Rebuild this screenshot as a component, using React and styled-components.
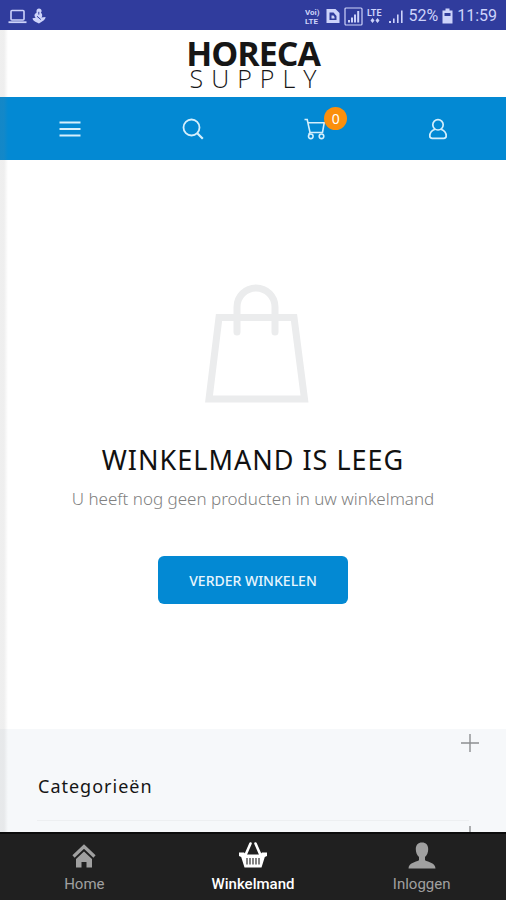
import React from 'react';
import styled, { createGlobalStyle } from 'styled-components';

const GlobalStyle = createGlobalStyle`
  * {
    box-sizing: border-box;
  }

  body {
    margin: 0;
    background: #fff;
    font-family: 'Noto Sans', 'Open Sans', sans-serif;
  }

  button {
    padding: 0;
    border: 0;
    background: none;
    font: inherit;
    color: inherit;
    cursor: pointer;
  }
`

const Screen = styled.div`
  display: flex;
  flex-direction: column;
  height: 100vh;
`

const StatusBar = styled.header`
  display: flex;
  align-items: center;
  justify-content: space-between;
  flex: none;
  height: 30px;
  padding: 2px 9px 0 8px;
  background: #303c9d;
  color: #cdd3fa;
  font: 16px/20px Roboto, sans-serif;
`

const StatusGroup = styled.div`
  display: flex;
  align-items: center;
  gap: ${props => props.$gap}px;
`

const Page = styled.div`
  position: relative;
  display: flex;
  flex-direction: column;
  flex: 1;
  min-height: 0;
  overflow: hidden;
`

const EdgeShadow = styled.div`
  position: absolute;
  top: 0;
  bottom: 0;
  left: 0;
  width: 8px;
  background: linear-gradient(to right, rgba(128, 128, 128, 0.13) 50%, rgba(128, 128, 128, 0));
  pointer-events: none;
`

const Logo = styled.a`
  display: flex;
  flex-direction: column;
  align-items: center;
  flex: none;
  height: 67px;
  padding-top: 8px;
  color: #161616;
  font-family: 'Open Sans', sans-serif;
  text-decoration: none;
`

const LogoName = styled.span`
  font-size: 34px;
  line-height: 30px;
  font-weight: 700;
  letter-spacing: -1px;
`

const LogoSub = styled.span`
  padding-left: 8px;
  font-size: 25px;
  line-height: 20px;
  font-weight: 300;
  letter-spacing: 8px;
`

const Toolbar = styled.nav`
  display: flex;
  align-items: center;
  justify-content: space-between;
  flex: none;
  height: 63px;
  padding: 0 54px 0 56px;
  background: #0389d3;
  color: #d5effc;
`

const ToolButton = styled.button`
  position: relative;
  display: flex;
  align-items: center;
  justify-content: center;
  width: 28px;
  height: 28px;
`

const Badge = styled.span`
  position: absolute;
  top: -8px;
  left: 23px;
  width: 23px;
  height: 23px;
  border-radius: 50%;
  background: #fb8f0c;
  color: #fff;
  font-size: 14px;
  line-height: 23px;
  text-align: center;
`

const EmptyCart = styled.main`
  display: flex;
  flex-direction: column;
  align-items: center;
  flex: none;
  height: 569px;
  padding: 124px 16px 0;
  text-align: center;
`

const Title = styled.h1`
  margin: 36px 0 0;
  color: #111;
  font-size: 27px;
  line-height: 40px;
  font-weight: 400;
  letter-spacing: 1px;
`

const Message = styled.p`
  margin: 7px 0 0;
  color: #808080;
  font-size: 17px;
  line-height: 24px;
  font-weight: 300;
`

const ShopButton = styled.button`
  && {
    height: 48px;
    margin-top: 45px;
    padding: 0 31px;
    border-radius: 6px;
    background: #0389d3;
    color: #e8f6fe;
    font-size: 14px;
    font-weight: 500;
  }
`

const Sections = styled.section`
  flex: none;
  background: #f6f8fa;
`

const SectionRow = styled.button`
  && {
    display: flex;
    align-items: flex-start;
    justify-content: space-between;
    width: 100%;
    height: 91px;
    padding: 5px 27px 0 38px;
    text-align: left;
  }
`

const SectionTitle = styled.span`
  padding-top: 38px;
  color: #151515;
  font-size: 18px;
  line-height: 28px;
  letter-spacing: 1px;
`

const Divider = styled.hr`
  height: 1px;
  margin: 0 37px;
  border: 0;
  background: #edeff1;
`

const TabBar = styled.nav`
  display: flex;
  flex: none;
  height: 68px;
  border-top: 2px solid #0c0c0c;
  background: #202020;
`

const Tab = styled.a`
  display: flex;
  flex-direction: column;
  align-items: center;
  flex: 1;
  padding-top: 7px;
  gap: 5px;
  color: ${props => (props.$active ? '#fff' : '#a0a0a0')};
  font: ${props => (props.$active ? 500 : 400)} 15px/20px Roboto, sans-serif;
  text-decoration: none;
`

const LaptopIcon = () => (
  <svg width="19" height="15" viewBox="0 0 19 15" fill="none" stroke="currentColor">
    <rect x="3" y="1.5" width="13" height="9.5" rx="1" strokeWidth="1.6" />
    <path d="M0.5 13.2h18" strokeWidth="1.8" />
  </svg>
)

const SyncIcon = () => (
  <svg width="14" height="16" viewBox="0 0 14 16" fill="currentColor">
    <path d="M7 0.500c1.600 0 2.600 1 2.600 2.400 0 .8-.3 1.400-.8 1.900.9.6 1.400 1.400 1.400 2.600 0 .8-.3 1.500-.8 2.100l4.200-.5c-.3 2-1.500 3.500-3.200 4.200L7 15.500l-3.200-1.600C2 13.200.8 12 .5 10.200l3.200-.5c-.8-.5-1.200-1.300-1.200-2.300 0-1.300.8-2.200 2-2.500V3C4.500 1.500 5.500.5 7 .5z" />
    <path d="M5 8.300l3.800 3.200M6.800 3.800v2.800" stroke="#303c9d" strokeWidth="1" />
  </svg>
)

const VolteIcon = () => (
  <svg width="17" height="17" viewBox="0 0 17 17" fill="currentColor" fontFamily="Roboto, sans-serif" fontWeight="700">
    <text x="0" y="7" fontSize="8">Voi)</text>
    <text x="0" y="16" fontSize="8">LTE</text>
  </svg>
)

const CardIcon = () => (
  <svg width="14" height="16" viewBox="0 0 14 16">
    <path d="M0.500 1h9L13.500 5v10h-13z" fill="currentColor" />
    <path d="M3.500 4.500h4l3 3.500v4h-7z" fill="#303c9d" />
    <path d="M5.500 7.500h2l1 1.500v1.500h-3z" fill="currentColor" />
  </svg>
)

const BoxedSignalIcon = () => (
  <svg width="19" height="19" viewBox="0 0 19 19">
    <rect x="1" y="1" width="17" height="17" rx="1" fill="none" stroke="currentColor" strokeWidth="1.2" />
    <path d="M4 13h2v2.500H4zM7 10.500h2v5H7zM10 7.500h2v8h-2zM13.200 4h2v11.500h-2z" fill="currentColor" />
  </svg>
)

const LteIcon = () => (
  <svg width="17" height="17" viewBox="0 0 17 17" fill="currentColor">
    <text x="0" y="8" fontSize="9" fontFamily="Roboto, sans-serif" fontWeight="700">LTE</text>
    <path d="M3.500 12.500 5.500 10l2 2.500-2 2.500zM8.500 12.500l2-2.500 2 2.500-2 2.500z" />
  </svg>
)

const SignalIcon = () => (
  <svg width="16" height="15" viewBox="0 0 16 15">
    <path d="M1 12h2v2H1zM5 9.500h1.600V14H5zM9 5.500h1.600V14H9zM13 1.500h1.600V14H13z" fill="currentColor" />
  </svg>
)

const BatteryIcon = () => (
  <svg width="11" height="16" viewBox="0 0 11 16">
    <path d="M3.500 0.500h4V2.500H10.500V15.500H0.500V2.500h3z" fill="currentColor" />
    <path d="M2.500 5h6v3h-6z" fill="#303c9d" />
  </svg>
)

const MenuIcon = () => (
  <svg width="22" height="18" viewBox="0 0 22 18" stroke="currentColor" strokeWidth="2">
    <path d="M0.500 2.500h21M0.500 9h21M0.500 15.500h21" />
  </svg>
)

const SearchIcon = () => (
  <svg width="22" height="22" viewBox="0 0 22 22" fill="none" stroke="currentColor" strokeWidth="1.8">
    <circle cx="9.500" cy="9.500" r="8" />
    <path d="M15.300 15.300 20.800 20.800" strokeWidth="2.200" />
  </svg>
)

const CartIcon = () => (
  <svg width="22" height="22" viewBox="0 0 22 22" fill="none" stroke="currentColor" strokeWidth="1.6">
    <path d="M0.500 1.500H3.200L6 14.500H18.500L20.200 4.800H4M6 14.500 4.800 16.500" />
    <circle cx="6.800" cy="18.300" r="2.300" />
    <circle cx="17.500" cy="18.300" r="2.300" />
  </svg>
)

const AccountIcon = () => (
  <svg width="20" height="22" viewBox="0 0 20 22" fill="none" stroke="currentColor" strokeWidth="1.7">
    <circle cx="10" cy="6.800" r="5.200" />
    <path d="M7 11.300C3.800 12.500 1.800 15 1.800 18c0 1.500 1 2.300 2.500 2.300h11.400c1.500 0 2.500-.8 2.500-2.300 0-3-2-5.500-5.200-6.700" />
  </svg>
)

const BagIcon = () => (
  <svg width="112" height="120" viewBox="-8 0 112 120" fill="none" stroke="#ebeced" strokeWidth="7">
    <path d="M14 33.500H89L99.500 115H4z" />
    <path d="M32 48V23a19 19 0 0 1 38 0V48" strokeLinecap="round" />
  </svg>
)

const PlusIcon = () => (
  <svg width="18" height="18" viewBox="0 0 18 18" stroke="#8d8f91" strokeWidth="1.4">
    <path d="M0 9h18M9 0v18" />
  </svg>
)

const HomeIcon = () => (
  <svg width="28" height="28" viewBox="0 0 28 28">
    <path d="M3.500 15.500 14 5.500 24.500 15.500" fill="none" stroke="currentColor" strokeWidth="3.200" />
    <path d="M14 10.500 22 18V26.500H16.500V21H11.500V26.500H6V18z" fill="currentColor" />
  </svg>
)

const BasketIcon = () => (
  <svg width="28" height="28" viewBox="0 0 28 28">
    <path d="M6.500 14 11.500 2.500M21.500 14 16.500 2.500" stroke="currentColor" strokeWidth="2.600" strokeLinecap="round" fill="none" />
    <path d="M0 11.500h5l2 2h14l2-2h5v3.500l-2.200 1L22.500 26.500h-17L2.200 16 0 15z" fill="currentColor" />
    <path d="M8 17v6.500M11 17v6.500M14 17v6.500M17 17v6.500M20 17v6.500" stroke="#202020" strokeWidth="1.100" />
  </svg>
)

const PersonIcon = () => (
  <svg width="28" height="28" viewBox="0 0 28 28" fill="currentColor">
    <path d="M14 1.500c4 0 6.200 2.600 6.200 6.800 0 3.200-1.200 6.200-3.200 7.700v3.200c3.500 2 10.200 2.300 10.500 8.300H.5c.3-6 7-6.300 10.500-8.300V16c-2-1.500-3.200-4.500-3.200-7.700 0-4.200 2.200-6.800 6.200-6.800z" />
  </svg>
)

const tabs = [
  { label: 'Home', icon: HomeIcon },
  { label: 'Winkelmand', icon: BasketIcon, active: true },
  { label: 'Inloggen', icon: PersonIcon },
]

const App = () => (
  <Screen>
    <GlobalStyle />
    <StatusBar>
      <StatusGroup $gap={5}>
        <LaptopIcon />
        <SyncIcon />
      </StatusGroup>
      <StatusGroup $gap={4}>
        <VolteIcon />
        <CardIcon />
        <BoxedSignalIcon />
        <LteIcon />
        <SignalIcon />
        <span>52%</span>
        <BatteryIcon />
        <span>11:59</span>
      </StatusGroup>
    </StatusBar>
    <Page>
      <Logo href="#">
        <LogoName>HORECA</LogoName>
        <LogoSub>SUPPLY</LogoSub>
      </Logo>
      <Toolbar>
        <ToolButton aria-label="Menu"><MenuIcon /></ToolButton>
        <ToolButton aria-label="Zoeken"><SearchIcon /></ToolButton>
        <ToolButton aria-label="Winkelmand">
          <CartIcon />
          <Badge>0</Badge>
        </ToolButton>
        <ToolButton aria-label="Account"><AccountIcon /></ToolButton>
      </Toolbar>
      <EmptyCart>
        <BagIcon />
        <Title>WINKELMAND IS LEEG</Title>
        <Message>U heeft nog geen producten in uw winkelmand</Message>
        <ShopButton>VERDER WINKELEN</ShopButton>
      </EmptyCart>
      <Sections>
        <SectionRow>
          <SectionTitle>Categorieën</SectionTitle>
          <PlusIcon />
        </SectionRow>
        <Divider />
        <SectionRow aria-label="Meer">
          <SectionTitle />
          <PlusIcon />
        </SectionRow>
      </Sections>
      <EdgeShadow />
    </Page>
    <TabBar>
      {tabs.map(({ label, icon: Icon, active }) => (
        <Tab key={label} href="#" $active={active}>
          <Icon />
          {label}
        </Tab>
      ))}
    </TabBar>
  </Screen>
)

export default App;
